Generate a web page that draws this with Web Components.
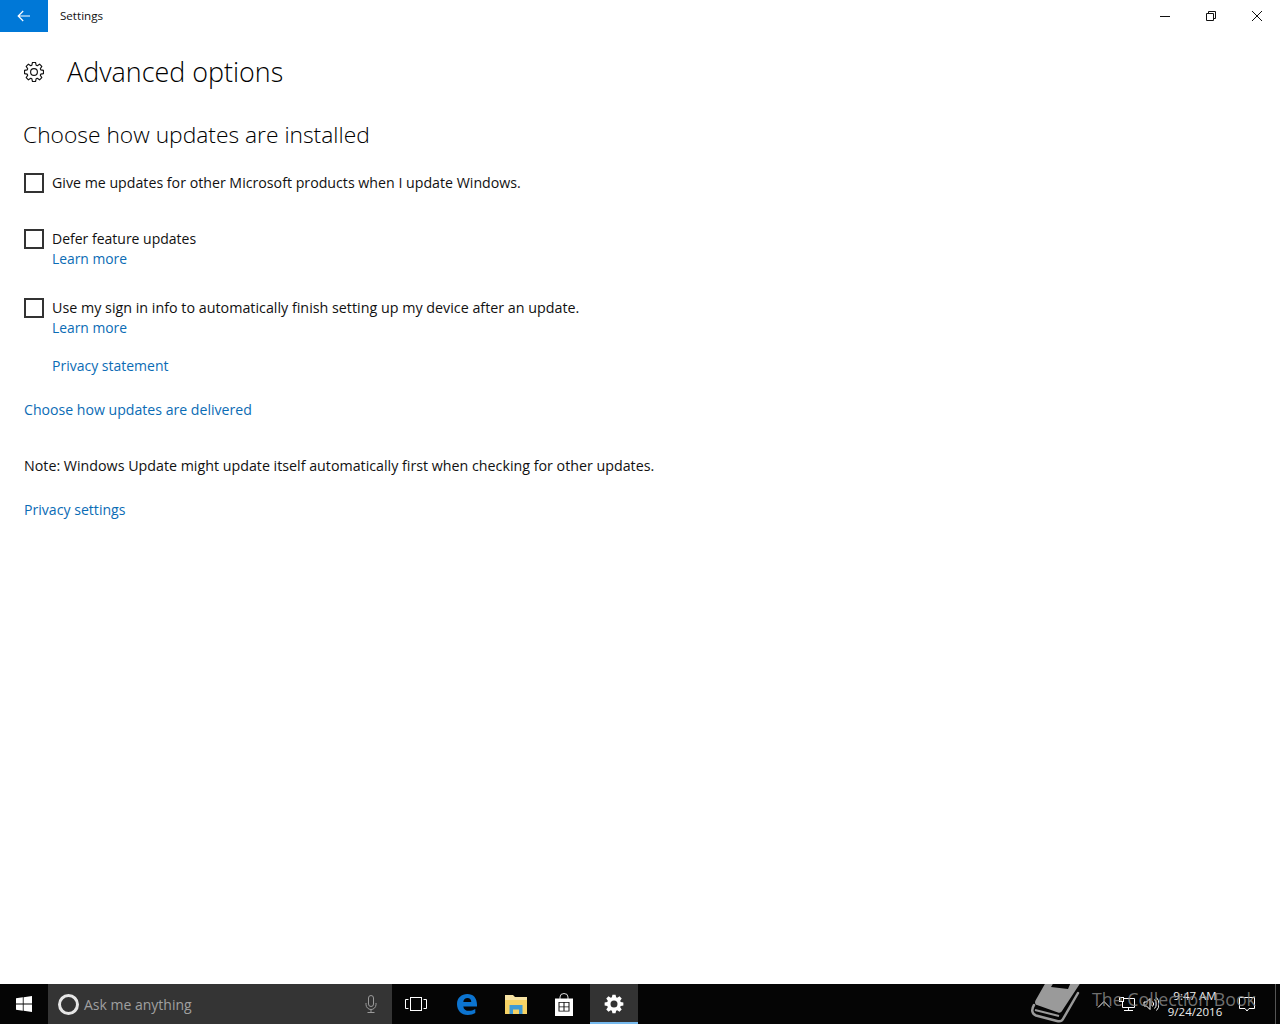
<!DOCTYPE html>
<html>
<head>
<meta charset="utf-8">
<title>Settings</title>
<style>
  html, body { margin: 0; height: 100%; }
  body {
    width: 1280px; height: 1024px; overflow: hidden; background: #fff;
    display: flex; flex-direction: column;
    font-family: "Open Sans", "Noto Sans", sans-serif; color: #000;
  }
</style>
</head>
<body>
<title-bar>Settings</title-bar>
<settings-page>
  <page-heading>Advanced options</page-heading>
  <section-heading>Choose how updates are installed</section-heading>
  <check-option style="margin-top:22px;font-size:14.2px">Give me updates for other Microsoft products when I update Windows.</check-option>
  <check-option style="margin-top:36px">Defer feature updates<text-link slot="extra" style="font-size:13.85px">Learn more</text-link></check-option>
  <check-option style="margin-top:29px;font-size:14.3px">Use my sign in info to automatically finish setting up my device after an update.<text-link slot="extra" style="font-size:13.85px">Learn more</text-link></check-option>
  <text-link style="margin:18px 0 0 28px">Privacy statement</text-link>
  <text-link style="margin-top:24px;font-size:14.12px">Choose how updates are delivered</text-link>
  <plain-note style="margin-top:36px">Note: Windows Update might update itself automatically first when checking for other updates.</plain-note>
  <text-link style="margin-top:24px;font-size:14.12px">Privacy settings</text-link>
</settings-page>
<task-bar></task-bar>

<script>
// Outline of a cog wheel, used by the header icon and the taskbar icon
function gearPath(cx, cy, outer, inner, teeth) {
  const step = Math.PI * 2 / teeth;
  const pts = [];
  for (let i = 0; i < teeth; i++) {
    const a = i * step - Math.PI / 2;
    const offsets = [[-0.5, inner], [-0.27, outer], [0.27, outer], [0.5, inner]];
    offsets.forEach(([f, r]) => {
      const t = a + f * step * 0.78;
      pts.push((cx + r * Math.cos(t)).toFixed(2) + ' ' + (cy + r * Math.sin(t)).toFixed(2));
    });
  }
  return 'M' + pts.join('L') + 'Z';
}

// Window chrome: back button, title, min / restore / close
class TitleBar extends HTMLElement {
  constructor() {
    super();
    this.attachShadow({ mode: 'open' });
    this.shadowRoot.innerHTML = `
      <style>
        :host { display: flex; height: 32px; flex: none; align-items: stretch; }
        .back { width: 48px; background: #0078d7; display: flex; align-items: center; justify-content: center; }
        .name { margin-left: 12px; font-size: 11.6px; line-height: 32px; color: #111; }
        .controls { margin-left: auto; display: flex; }
        .controls div { width: 46px; display: flex; align-items: center; justify-content: center; }
      </style>
      <div class="back">
        <svg width="14" height="12" viewBox="0 0 14 12" fill="none" stroke="#fff" stroke-width="1.2"><path d="M13 6H1.2M6.2 1 1.2 6l5 5"/></svg>
      </div>
      <div class="name"><slot></slot></div>
      <div class="controls">
        <div><svg width="10" height="10" viewBox="0 0 10 10" stroke="#111" stroke-width="1"><path d="M0 5.500h10"/></svg></div>
        <div><svg width="10" height="10" viewBox="0 0 10 10" fill="none" stroke="#111" stroke-width="1"><path d="M.5 2.500h7v7h-7zM2.500 2.500v-2h7v7h-2"/></svg></div>
        <div><svg width="10" height="10" viewBox="0 0 10 10" fill="none" stroke="#111" stroke-width="1"><path d="M0 0l10 10M10 0 0 10"/></svg></div>
      </div>`;
  }
}

// Content column of the settings app
class SettingsPage extends HTMLElement {
  constructor() {
    super();
    this.attachShadow({ mode: 'open' });
    this.shadowRoot.innerHTML = `
      <style>
        :host { display: flex; flex-direction: column; align-items: flex-start; flex: 1; padding-left: 24px; min-height: 0; }
      </style>
      <slot></slot>`;
  }
}

class PageHeading extends HTMLElement {
  constructor() {
    super();
    this.attachShadow({ mode: 'open' });
    this.shadowRoot.innerHTML = `
      <style>
        :host { display: flex; align-items: center; height: 40px; margin-top: 20px; }
        svg { width: 20px; height: 20px; }
        h1 { margin: 0 0 0 23px; font-weight: 300; font-size: 26.9px; line-height: 40px; color: #000; }
      </style>
      <svg viewBox="0 0 20 20" fill="none" stroke="#111" stroke-width="1.15" stroke-linejoin="round">
        <circle cx="10" cy="10" r="3.400"/>
        <path d="${gearPath(10, 10, 9.6, 7.1, 8)}"/>
      </svg>
      <h1><slot></slot></h1>`;
  }
}

class SectionHeading extends HTMLElement {
  constructor() {
    super();
    this.attachShadow({ mode: 'open' });
    this.shadowRoot.innerHTML = `
      <style>
        :host { display: block; margin: 27px 0 0 -1px; font-weight: 300; font-size: 22.8px; line-height: 32px; color: #000; }
      </style>
      <slot></slot>`;
  }
}

class CheckOption extends HTMLElement {
  constructor() {
    super();
    this.attachShadow({ mode: 'open' });
    this.shadowRoot.innerHTML = `
      <style>
        :host { display: grid; grid-template-columns: 20px auto; column-gap: 8px; font-size: 14px; line-height: 20px; color: #111; }
        .box { box-sizing: border-box; width: 20px; height: 20px; border: 2px solid #333; }
      </style>
      <div class="box"></div>
      <div><slot></slot></div>
      <div></div>
      <div><slot name="extra"></slot></div>`;
  }
}

class TextLink extends HTMLElement {
  constructor() {
    super();
    this.attachShadow({ mode: 'open' });
    this.shadowRoot.innerHTML = `
      <style>
        :host { display: block; font-size: 14px; line-height: 20px; color: #0b6cb5; cursor: pointer; }
      </style>
      <slot></slot>`;
  }
}

class PlainNote extends HTMLElement {
  constructor() {
    super();
    this.attachShadow({ mode: 'open' });
    this.shadowRoot.innerHTML = `
      <style>
        :host { display: block; font-size: 14.25px; line-height: 20px; color: #111; }
      </style>
      <slot></slot>`;
  }
}

// Windows 10 taskbar with the watermark on top of the tray
class TaskBar extends HTMLElement {
  constructor() {
    super();
    this.attachShadow({ mode: 'open' });
    this.shadowRoot.innerHTML = `
      <style>
        :host { display: flex; flex: none; position: relative; height: 40px; background: #050505; align-items: stretch; color: #fff; overflow: hidden; }
        .btn { width: 48px; flex: none; display: flex; align-items: center; justify-content: center; box-sizing: border-box; }
        .search { width: 344px; flex: none; background: #343434; display: flex; align-items: center; box-sizing: border-box; padding: 0 14px 0 10px; }
        .ring { width: 15px; height: 15px; border: 3px solid #e6e6e6; border-radius: 50%; flex: none; }
        .hint { margin-left: 5px; font-size: 14px; color: #a0a0a0; flex: 1; }
        .active { background: #333; border-bottom: 2px solid #76b9ed; padding-top: 2px; }
        .tray { margin-left: auto; display: flex; align-items: center; }
        .clock { width: 68px; text-align: center; font-size: 11.5px; line-height: 16px; color: #eee; margin-left: 2px; }
        .edge { width: 1px; align-self: stretch; background: #555; margin: 0 4px 0 20px; }
        .mark { position: absolute; left: 1025px; top: 0; display: flex; align-items: center; pointer-events: none; }
        .mark span { font-size: 17.8px; line-height: 30px; color: rgba(140,140,140,.8); margin-left: -3px; white-space: nowrap; position: relative; top: -5px; }
      </style>
      <div class="btn">
        <svg width="16" height="16" viewBox="0 0 16 16" fill="#fff"><path d="M0 2.300 6.800 1.300v6.200H0zM7.600 1.200 16 0v7.500H7.600zM0 8.400h6.800v6.300L0 13.700zM7.600 8.400H16V16l-8.400-1.200z"/></svg>
      </div>
      <div class="search">
        <div class="ring"></div>
        <div class="hint">Ask me anything</div>
        <svg width="14" height="18" viewBox="0 0 14 18" fill="none" stroke="#9a9a9a"><rect x="4.500" y=".5" width="5" height="11" rx="2.500"/><path d="M2 8v1.500a5 5 0 0 0 10 0V8M7 14.500v3M3.500 17.500h7"/></svg>
      </div>
      <div class="btn">
        <svg width="22" height="14" viewBox="0 0 22 14" fill="none" stroke="#fff"><rect x="5.500" y=".5" width="11" height="13"/><path d="M3.500 2.500h-3v9h3M18.500 2.500h3v9h-3"/></svg>
      </div>
      <div class="btn" style="margin-left:3px">
        <svg width="22" height="22" viewBox="0 0 22 22"><path fill="#0c74d0" d="M1 11C1 4.800 5.600 1 11.300 1 17.400 1 21 5 21 11.800v1.600H7.300c.3 3 2.700 4.400 5.500 4.400 2.400 0 4.400-.6 6.500-1.900v4.200c-2 1.200-4.600 1.900-7.500 1.900C5.200 22 1 17.500 1 11zm6.300-2h8c0-2.500-1.600-3.900-3.800-3.900-2.300 0-3.900 1.500-4.200 3.900z"/></svg>
      </div>
      <div class="btn" style="margin-left:1px">
        <svg width="22" height="19" viewBox="0 0 22 19"><path fill="#f7e3a3" d="M0 0h8l2 2h12v4H0z"/><path fill="#f6d264" d="M0 5h22v14H0z"/><path fill="#3d9ad6" d="M4.500 10h13v9h-3.500v-4.500H8V19H4.500z"/></svg>
      </div>
      <div class="btn">
        <svg width="20" height="23" viewBox="0 0 20 23"><path fill="none" stroke="#ddd" d="M6 6V4a4 3.500 0 0 1 8 0v2"/><path fill="#fff" d="M1 5.500h18V23H1z"/><path fill="#111" d="M4.500 9v9.500h11V9zM5.500 9.800h4v3.700h-4zM10.500 9.800h4v3.700h-4zM5.500 14.300h4v3.500h-4zM10.500 14.300h4v3.500h-4z" fill-rule="evenodd"/></svg>
      </div>
      <div class="btn active" style="margin-left:2px">
        <svg width="20" height="20" viewBox="0 0 20 20"><path fill-rule="evenodd" fill="#fff" d="${gearPath(10, 10, 9.5, 7, 8)}M10 6.500a3.500 3.500 0 1 0 0 7 3.500 3.500 0 0 0 0-7z"/></svg>
      </div>
      <div class="tray">
        <svg width="14" height="8" viewBox="0 0 14 8" fill="none" stroke="#fff"><path d="M1 7.500 7 1.500l6 6"/></svg>
        <svg style="margin-left:8px" width="16" height="16" viewBox="0 0 16 16" fill="none" stroke="#fff"><path d="M3.500 2.500h12v9h-12zM9.500 11.500v3M5 14.500h9"/><rect x=".5" y="1.500" width="4" height="4" fill="#050505"/></svg>
        <svg style="margin-left:8px" width="16" height="14" viewBox="0 0 16 14" fill="none" stroke="#fff"><path d="M1 5h2.500L7 1.500v11L3.500 9H1zM9.500 4.500a3.500 3.500 0 0 1 0 5M11.500 2.500a6.500 6.500 0 0 1 0 9M13.500 .5a9.500 9.500 0 0 1 0 13"/></svg>
        <div class="clock">9:47 AM<br>9/24/2016</div>
        <svg style="margin-left:10px" width="16" height="16" viewBox="0 0 16 16" fill="none" stroke="#fff"><path d="M.5 1.500h15v11H10l-2 2.500-2-2.500H.5z"/></svg>
        <div class="edge"></div>
      </div>
      <div class="mark">
        <svg width="70" height="40" viewBox="0 0 70 40">
          <path fill="#9a9a9a" fill-rule="evenodd" d="M21 -2H56L37 27c-1 1.500-2 2-4 1.500L12 21c-2-.8-2.500-2.500-1.500-4.500zM29 -2 26 3 43 5 46 -2z"/>
          <path fill="none" stroke="#9a9a9a" stroke-width="2.500" stroke-linecap="round" d="M9 21c-3 5-2 9 2 10.500L32 37c3 .8 5 0 6-2L53 9"/>
          <path fill="none" stroke="#9a9a9a" stroke-width="2" d="M10 26l24 6"/>
        </svg>
        <span>The Collection Book</span>
      </div>`;
  }
}

customElements.define('title-bar', TitleBar);
customElements.define('settings-page', SettingsPage);
customElements.define('page-heading', PageHeading);
customElements.define('section-heading', SectionHeading);
customElements.define('check-option', CheckOption);
customElements.define('text-link', TextLink);
customElements.define('plain-note', PlainNote);
customElements.define('task-bar', TaskBar);
</script>
</body>
</html>
